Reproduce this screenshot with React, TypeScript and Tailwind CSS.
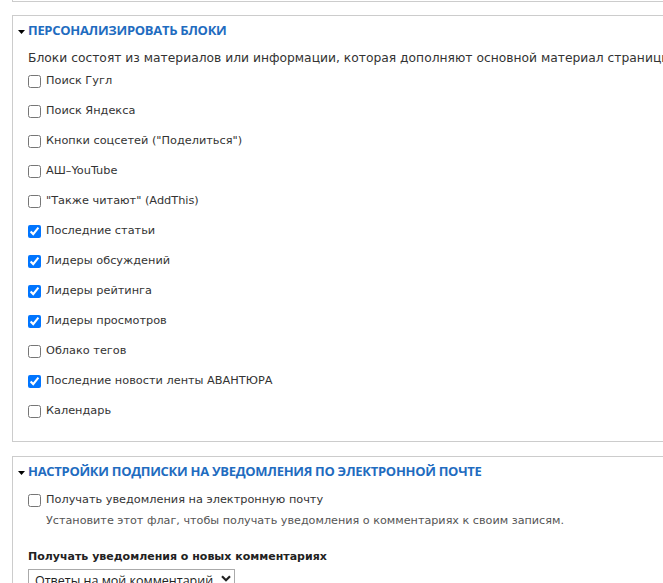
import { useState } from "react";

type Block = { label: string; checked: boolean };

const blocks: Block[] = [
  { label: "Поиск Гугл", checked: false },
  { label: "Поиск Яндекса", checked: false },
  { label: 'Кнопки соцсетей ("Поделиться")', checked: false },
  { label: "АШ–YouTube", checked: false },
  { label: '"Также читают" (AddThis)', checked: false },
  { label: "Последние статьи", checked: true },
  { label: "Лидеры обсуждений", checked: true },
  { label: "Лидеры рейтинга", checked: true },
  { label: "Лидеры просмотров", checked: true },
  { label: "Облако тегов", checked: false },
  { label: "Последние новости ленты АВАНТЮРА", checked: true },
  { label: "Календарь", checked: false },
];

function Legend({ title }: { title: string }) {
  return (
    <div className="flex h-[30px] items-center pl-[5px]">
      <svg width="7" height="4" viewBox="0 0 7 4" className="mr-[3px] mt-[1px]">
        <path d="M0 0h7L3.5 4z" fill="#000" />
      </svg>
      <span className="font-['Open_Sans'] text-[13px] font-bold tracking-[-0.3px] text-[#1f6cc0]">{title}</span>
    </div>
  );
}

export default function App() {
  const [notify, setNotify] = useState(false);
  return (
    <div className="min-h-screen overflow-hidden whitespace-nowrap bg-white font-['DejaVu_Sans',sans-serif] text-[11.3px] text-[#333]">
      <div className="ml-3 h-[2px] border-b border-l border-[#ccc]" />

      {/* блоки */}
      <div className="ml-3 mt-[13px] border border-r-0 border-[#ccc] pb-[15px]">
        <Legend title="ПЕРСОНАЛИЗИРОВАТЬ БЛОКИ" />
        <div className="mt-[5px] flex h-[15px] items-center pl-[15px] text-[12.3px]">
          Блоки состоят из материалов или информации, которая дополняют основной материал страницы
        </div>
        {blocks.map((b) => (
          <label key={b.label} className="flex h-[30px] items-center pl-[15px]">
            <input type="checkbox" defaultChecked={b.checked} className="m-0 h-[13px] w-[13px]" />
            <span className="ml-[5px]">{b.label}</span>
          </label>
        ))}
      </div>

      {/* подписка */}
      <div className="ml-3 mt-[14px] border border-r-0 border-[#ccc] pb-4">
        <Legend title="НАСТРОЙКИ ПОДПИСКИ НА УВЕДОМЛЕНИЯ ПО ЭЛЕКТРОННОЙ ПОЧТЕ" />
        <label className="mt-[1px] flex h-[24px] items-center pl-[15px]">
          <input
            type="checkbox"
            checked={notify}
            onChange={(e) => setNotify(e.target.checked)}
            className="m-0 h-[13px] w-[13px]"
          />
          <span className="ml-[5px]">Получать уведомления на электронную почту</span>
        </label>
        <div className="flex h-[18px] items-center pl-[33px] text-[11.2px] text-[#555]">
          Установите этот флаг, чтобы получать уведомления о комментариях к своим записям.
        </div>
        <div className="mt-[19px] flex h-[16px] items-center pl-[15px] text-[11px] font-bold text-[#222]">
          Получать уведомления о новых комментариях
        </div>
        <div className="mt-[4px] pl-[15px]">
          <div className="relative w-[207px]">
            <select className="h-[24px] w-full appearance-none border border-[#aaa] bg-white pl-[6px] pr-[16px] font-['Open_Sans'] text-[12.5px] text-[#222]">
              <option>Ответы на мой комментарий</option>
              <option>Все комментарии</option>
            </select>
            <svg
              width="10"
              height="7"
              viewBox="0 0 10 7"
              className="pointer-events-none absolute right-[4px] top-[6px]"
            >
              <path d="M1 1.2l4 4 4-4" fill="none" stroke="#222" strokeWidth="2.2" />
            </svg>
          </div>
        </div>
      </div>
    </div>
  );
}
